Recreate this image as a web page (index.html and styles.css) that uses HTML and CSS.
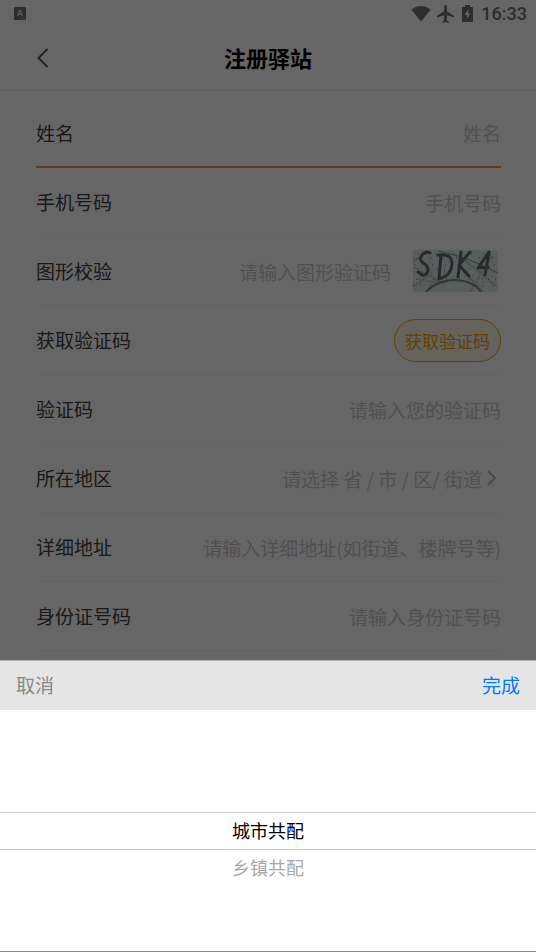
FILE: index.html
```html
<!DOCTYPE html>
<html lang="zh-CN">
<head>
<meta charset="utf-8">
<meta name="viewport" content="width=device-width, initial-scale=1">
<title>注册驿站</title>
<link rel="stylesheet" href="styles.css">
</head>
<body>
<div class="status">
  <svg class="status-app" viewBox="0 0 12 13" width="12" height="13" aria-hidden="true"><rect width="12" height="13" rx="1" fill="#707070"/><path d="M3.600 9 5.500 3.500h1L8.400 9M4.400 7.200h3.200" fill="none" stroke="#ddd" stroke-width="1.400"/><path d="M6 11.500h5" stroke="#bbb" stroke-dasharray="1 1"/></svg>
  <div class="status-right">
    <svg viewBox="0 0 20 16" width="20" height="16" aria-hidden="true"><path d="M.3 3.500Q10-3.300 19.700 3.500L10 15.500z"/></svg>
    <svg class="plane" viewBox="2 2 19 20" width="17" height="18" aria-hidden="true"><path d="M21 16v-2l-8-5V3.500a1.500 1.500 0 0 0-3 0V9l-8 5v2l8-2.500V19l-2 1.500V22l3.500-1 3.500 1v-1.500L13 19v-5.500z"/></svg>
    <svg class="battery" viewBox="0 0 11 17" width="11" height="17" aria-hidden="true"><path fill-rule="evenodd" d="M3 0h5v2h2.200q.8 0 .8.800v13.400q0 .8-.8.800H.8q-.8 0-.8-.8V2.800Q0 2 .8 2H3zM6.500 4 2.800 10h2.300v4L8.300 8.500H6z"/></svg>
    <span class="clock">16:33</span>
  </div>
</div>
<header class="header">
  <button class="back" type="button" aria-label="返回"><svg viewBox="0 0 12 20" width="12" height="20"><path d="M10.500 1 1.500 10l9 9" fill="none" stroke="#555" stroke-width="2"/></svg></button>
  <h1>注册驿站</h1>
</header>
<form class="form">
  <div class="row active"><label for="name">姓名</label><input id="name" type="text" placeholder="姓名"></div>
  <div class="row"><label for="phone">手机号码</label><input id="phone" type="tel" placeholder="手机号码"></div>
  <div class="row"><label for="captcha">图形校验</label><input id="captcha" type="text" placeholder="请输入图形验证码">
    <svg class="captcha" viewBox="0 0 85 42" width="85" height="42" role="img" aria-label="SDK4">
      <rect width="85" height="42" fill="#dcebe8"/>
      <g fill="none" stroke="#c2cdb4" stroke-width="2"><path d="M0 17 30 33M4 29l28 5M48 7l36 30M51 22l20 20M57 42 79 6M0 37 18 24"/></g>
      <g fill="none" stroke="#87958e" stroke-width="1"><path d="M0 12Q8 4 18 2M25 1Q55 7 85 23"/></g>
      <path d="M0 8h85M2 15h82M1 22h84M3 29h82M0 35h22M62 36h23M5 4h78" stroke="#65766f" stroke-width="1" stroke-dasharray="1 6 1 9 1 12 1 5"/>
      <path d="M5 19h80M0 26h85M9 12h76M0 32h85" stroke="#8da19a" stroke-width="1" stroke-dasharray="1 6 1 10 1 7"/>
      <path d="M13 42Q17 37 24 34 32 30 43 30 61 31 68 42" fill="none" stroke="#7b8881" stroke-width="2"/>
      <g fill="none" stroke="#68686e" stroke-width="3" stroke-linecap="round" stroke-linejoin="round"><path d="M17 3Q11 0 8 7q-2 4 4 7 5 5 2 9-3 5-9-1M28 5 26 28M25 5q14-2 14 9-1 12-13 15M48 2l-3 25M57 2 46 15l10 11M76 2 65 18l10-1M76 3l-4 22"/></g>
    </svg>
  </div>
  <div class="row"><span class="label">获取验证码</span><button class="send" type="button">获取验证码</button></div>
  <div class="row"><label for="code">验证码</label><input id="code" type="text" placeholder="请输入您的验证码"></div>
  <div class="row"><label for="area">所在地区</label><input id="area" type="text" readonly placeholder="请选择 省 / 市 / 区/ 街道"><svg class="chevron" viewBox="0 0 10 16" width="10" height="16" aria-hidden="true"><path d="m1 1 7 7-7 7" fill="none" stroke="#b5b5b5" stroke-width="2"/></svg></div>
  <div class="row"><label for="address">详细地址</label><input id="address" type="text" placeholder="请输入详细地址(如街道、楼牌号等)"></div>
  <div class="row"><label for="idno">身份证号码</label><input id="idno" type="text" placeholder="请输入身份证号码"></div>
</form>
<div class="mask"></div>
<section class="sheet" role="dialog" aria-label="选择类型">
  <div class="toolbar"><button class="cancel" type="button">取消</button><button class="done" type="button">完成</button></div>
  <div class="picker" role="listbox" aria-label="类型">
    <div class="option selected" role="option" aria-selected="true">城市共配</div>
    <div class="option" role="option" aria-selected="false">乡镇共配</div>
  </div>
</section>
</body>
</html>
```
FILE: styles.css
```css
* { box-sizing: border-box; }
body {
  margin: 0;
  background: #fff;
  color: #404040;
  font-family: "Noto Sans CJK SC", sans-serif;
  font-size: 19px;
}
button, input {
  margin: 0;
  padding: 0;
  border: 0;
  background: none;
  color: inherit;
  font: inherit;
}
svg { display: block; flex: none; }
.status {
  display: flex;
  align-items: center;
  justify-content: space-between;
  height: 27px;
  padding: 0 9px 0 14px;
}
.status-right { display: flex; align-items: center; fill: #707070; }
.plane { margin-left: 6px; }
.battery { margin-left: 8px; }
.clock {
  margin-left: 8px;
  color: #707070;
  font: 500 18px/26px Roboto, sans-serif;
}
.header {
  display: grid;
  grid-template-columns: 48px 1fr 48px;
  align-items: center;
  height: 64px;
  padding: 0 25px;
  border-bottom: 2px solid #f5f5f5;
}
.back { display: flex; padding: 12px; }
h1 {
  margin: 0;
  padding-bottom: 2px;
  color: #000;
  font-size: 22px;
  font-weight: 700;
  line-height: 32px;
  text-align: center;
}
.form { padding: 8px 35px 0 36px; }
.row {
  display: flex;
  align-items: center;
  height: 69px;
  border-bottom: 1px solid #f5f5f5;
}
.row.active { border-bottom: 2px solid #f5924e; }
label, .label { flex: none; line-height: 28px; }
input {
  flex: 1;
  min-width: 0;
  height: 30px;
  text-align: right;
  outline: 0;
}
input::placeholder { color: #c8c8c8; opacity: 1; }
.captcha { margin: 0 3px 0 22px; }
.send {
  height: 43px;
  margin-left: auto;
  padding: 0 10px;
  border: 1px solid #f0a000;
  border-radius: 22px;
  background: #fff7e8;
  color: #f0a000;
  font-size: 17px;
}
.chevron { margin: 0 4px 0 5px; }
.mask { position: fixed; inset: 0; background: rgba(0, 0, 0, .6); }
.sheet {
  position: fixed;
  right: 0;
  bottom: 0;
  left: 0;
  background: #fff;
  border-bottom: 1px solid #888;
}
.toolbar {
  display: flex;
  justify-content: space-between;
  height: 50px;
  padding: 0 16px 2px;
  border-top: 1px solid #b0b0b0;
  background: #e5e5e5;
}
.cancel { color: #888; }
.done { color: #007aff; }
.picker { padding: 102px 0 64px; }
.option {
  height: 37px;
  color: #a8a8a8;
  font-size: 18px;
  line-height: 34px;
  text-align: center;
}
.option.selected {
  height: 38px;
  border: solid #ccc;
  border-width: 1px 0;
  color: #000;
}
```
